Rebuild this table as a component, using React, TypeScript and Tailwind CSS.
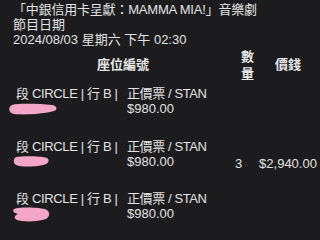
const font = {
  fontFamily: '"Liberation Sans", "Noto Sans CJK TC", sans-serif',
}

interface Ticket {
  blob: { w: number; h: number; x: number; y: number; d: string }
  qty?: string
  total?: string
}

const tickets: Ticket[] = [
  {
    blob: {
      w: 49,
      h: 12,
      x: -8,
      y: 2,
      d: 'M4 2 C12 0 32 1 44 2 C49 3 50 6 46 8 C36 11 16 12 6 11 C0 10 0 4 4 2 Z',
    },
  },
  {
    blob: {
      w: 37,
      h: 11,
      x: -3,
      y: 2,
      d: 'M3 1 C10 0 28 0 34 2 C37 4 36 8 30 9 C20 11 8 11 3 9 C0 7 0 3 3 1 Z',
    },
    qty: '3',
    total: '$2,940.00',
  },
  {
    blob: {
      w: 38,
      h: 15,
      x: -4,
      y: 1,
      d: 'M2 2 C8 0 28 0 35 3 C38 5 38 10 34 12 C26 15 10 15 5 13 C1 11 3 8 6 7 C2 6 0 4 2 2 Z',
    },
  },
]

function TicketRow({ t }: { t: Ticket }) {
  const b = t.blob
  return (
    <div className="flex h-[52.5px] text-[13px] leading-[15px]">
      <div className="w-[110px] pl-[16px]">
        <div className="tracking-[-0.35px] whitespace-nowrap">段 CIRCLE | 行 B |</div>
        <svg
          width={b.w}
          height={b.h}
          viewBox={`0 0 ${b.w} ${b.h}`}
          className="block"
          style={{ marginLeft: b.x, marginTop: b.y }}
        >
          <path d={b.d} fill="#f4a6c8" />
        </svg>
      </div>
      <div className="w-[122px] pl-[17px]">
        <div className="tracking-[-0.4px] whitespace-nowrap">正價票 / STAN</div>
        <div>$980.00</div>
      </div>
      <div className="w-[26px] pt-[17px] pl-[3px]">{t.qty}</div>
      <div className="w-[60px] pt-[17px] text-center">{t.total}</div>
    </div>
  )
}

export default function App() {
  return (
    <div
      className="w-[320px] h-[240px] overflow-hidden bg-[#1c1c1e] text-[#e2e2e2]"
      style={font}
    >
      <div className="px-[13px] pt-[2px] text-[13px] leading-[15px]">
        <div className="tracking-[-0.2px] whitespace-nowrap">
          「中銀信用卡呈獻：MAMMA MIA!」音樂劇
        </div>
        <div>節目日期</div>
        <div className="whitespace-nowrap">2024/08/03 星期六 下午 02:30</div>
      </div>

      <div className="flex h-[36px] items-center text-[13px] font-bold text-[#e8e8e8]">
        <div className="w-[232px] pl-[14px] text-center">座位編號</div>
        <div className="w-[26px] pl-[5px] text-center leading-[17px]">
          數<br />量
        </div>
        <div className="w-[60px] text-center">價錢</div>
      </div>

      <div className="pt-[3px] border-b border-[#2a2a2c]">
        {tickets.map((t, i) => (
          <TicketRow key={i} t={t} />
        ))}
      </div>
    </div>
  )
}
